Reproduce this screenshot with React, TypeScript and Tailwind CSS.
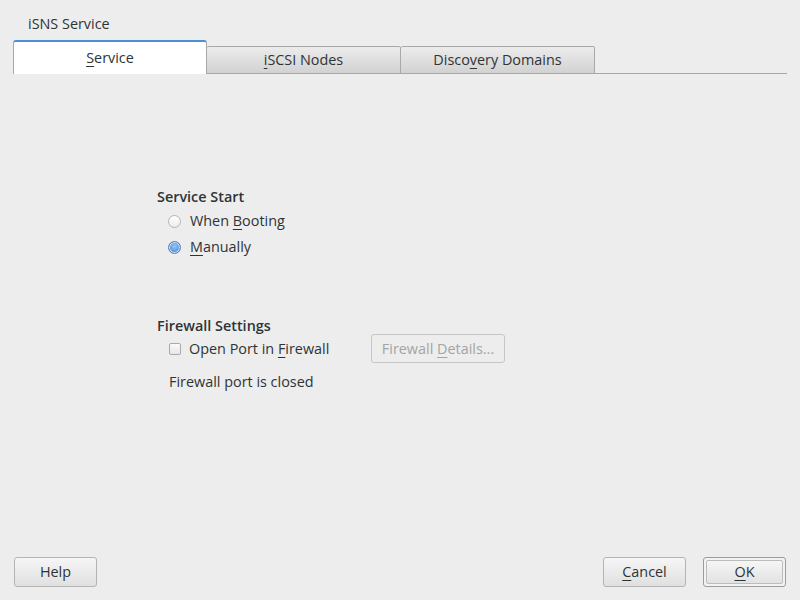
import React from "react";

const Mn = ({ children }: { children: React.ReactNode }) => (
  <span className="underline underline-offset-[3px] decoration-1">{children}</span>
);

const Radio = ({ checked }: { checked?: boolean }) =>
  checked ? (
    <span className="w-[13px] h-[13px] rounded-full border border-[#5b7fae] bg-[radial-gradient(circle_at_50%_40%,#9cc6f5_0%,#4f8fdf_70%)] flex items-center justify-center shadow-[inset_0_0_0_1px_#cfe1f7]" />
  ) : (
    <span className="w-[13px] h-[13px] rounded-full border border-[#b4b4b4] bg-gradient-to-b from-[#ffffff] to-[#ececec]" />
  );

const Tab = ({ children, active }: { children: React.ReactNode; active?: boolean }) =>
  active ? (
    <div className="w-[194px] h-[34px] bg-white border-l border-r border-[#a8a8a8] border-t-2 border-t-[#4a90d9] rounded-t-[3px] flex items-center justify-center">
      {children}
    </div>
  ) : (
    <div className="w-[194px] h-[28px] border border-[#a8a8a8] border-l-0 rounded-t-[2px] bg-gradient-to-b from-[#ececec] to-[#d2d2d2] flex items-center justify-center">
      {children}
    </div>
  );

const Button = ({
  children,
  className = "",
  disabled,
  isDefault,
}: {
  children: React.ReactNode;
  className?: string;
  disabled?: boolean;
  isDefault?: boolean;
}) =>
  isDefault ? (
    <div className={`border border-[#9c9c9c] rounded-[3px] p-[2px] bg-[#f2f2f2] ${className}`}>
      <div className="w-full h-full border border-[#bcbcbc] rounded-[2px] bg-gradient-to-b from-[#f6f6f6] to-[#e2e2e2] flex items-center justify-center">
        {children}
      </div>
    </div>
  ) : (
    <div
      className={`border rounded-[3px] flex items-center justify-center ${
        disabled
          ? "border-[#c6c6c6] bg-[#ededed] text-[#a4a4a4]"
          : "border-[#b4b4b4] bg-gradient-to-b from-[#f6f6f6] to-[#e0e0e0]"
      } ${className}`}
    >
      {children}
    </div>
  );

export default function App() {
  return (
    <div
      className="w-[800px] h-[600px] bg-[#ededed] flex flex-col text-[14.4px] leading-[18px] text-[#2e3436]"
      style={{ fontFamily: '"Open Sans", "Noto Sans", sans-serif' }}
    >
      <div className="pl-[28px] pt-[15px]">iSNS Service</div>

      {/* tabs */}
      <div className="mt-[7px] mx-[13px] flex items-end">
        <Tab active>
          <span>
            <Mn>S</Mn>ervice
          </span>
        </Tab>
        <Tab>
          <span>
            <Mn>i</Mn>SCSI Nodes
          </span>
        </Tab>
        <Tab>
          <span>
            Disco<Mn>v</Mn>ery Domains
          </span>
        </Tab>
        <div className="flex-1 border-b border-[#a8a8a8]" />
      </div>

      <div className="flex-1 pl-[157px]">
        <div className="mt-[114px] font-semibold">Service Start</div>
        <div className="mt-[2px] pl-[11px] flex flex-col">
          <div className="h-[26px] flex items-center gap-[9px]">
            <Radio />
            <span>
              When <Mn>B</Mn>ooting
            </span>
          </div>
          <div className="h-[26px] flex items-center gap-[9px]">
            <Radio checked />
            <span>
              <Mn>M</Mn>anually
            </span>
          </div>
        </div>

        <div className="mt-[57px] font-semibold leading-[17px]">Firewall Settings</div>
        <div className="pl-[12px] h-[29px] flex items-center">
          <span className="w-[12px] h-[12px] rounded-[2px] border border-[#a9a9a9] bg-gradient-to-b from-[#fbfbfb] to-[#e6e6e6]" />
          <span className="ml-[8px] w-[182px]">
            Open Port in <Mn>F</Mn>irewall
          </span>
          <Button disabled className="w-[134px] h-[29px]">
            <span>
              Firewall <Mn>D</Mn>etails...
            </span>
          </Button>
        </div>
        <div className="mt-[10px] pl-[12px]">Firewall port is closed</div>
      </div>

      <div className="flex items-center px-[14px] pb-[13px]">
        <Button className="w-[83px] h-[30px]">Help</Button>
        <div className="flex-1" />
        <Button className="w-[83px] h-[30px]">
          <span>
            <Mn>C</Mn>ancel
          </span>
        </Button>
        <Button isDefault className="ml-[17px] w-[83px] h-[30px]">
          <span>
            <Mn>O</Mn>K
          </span>
        </Button>
      </div>
    </div>
  );
}
